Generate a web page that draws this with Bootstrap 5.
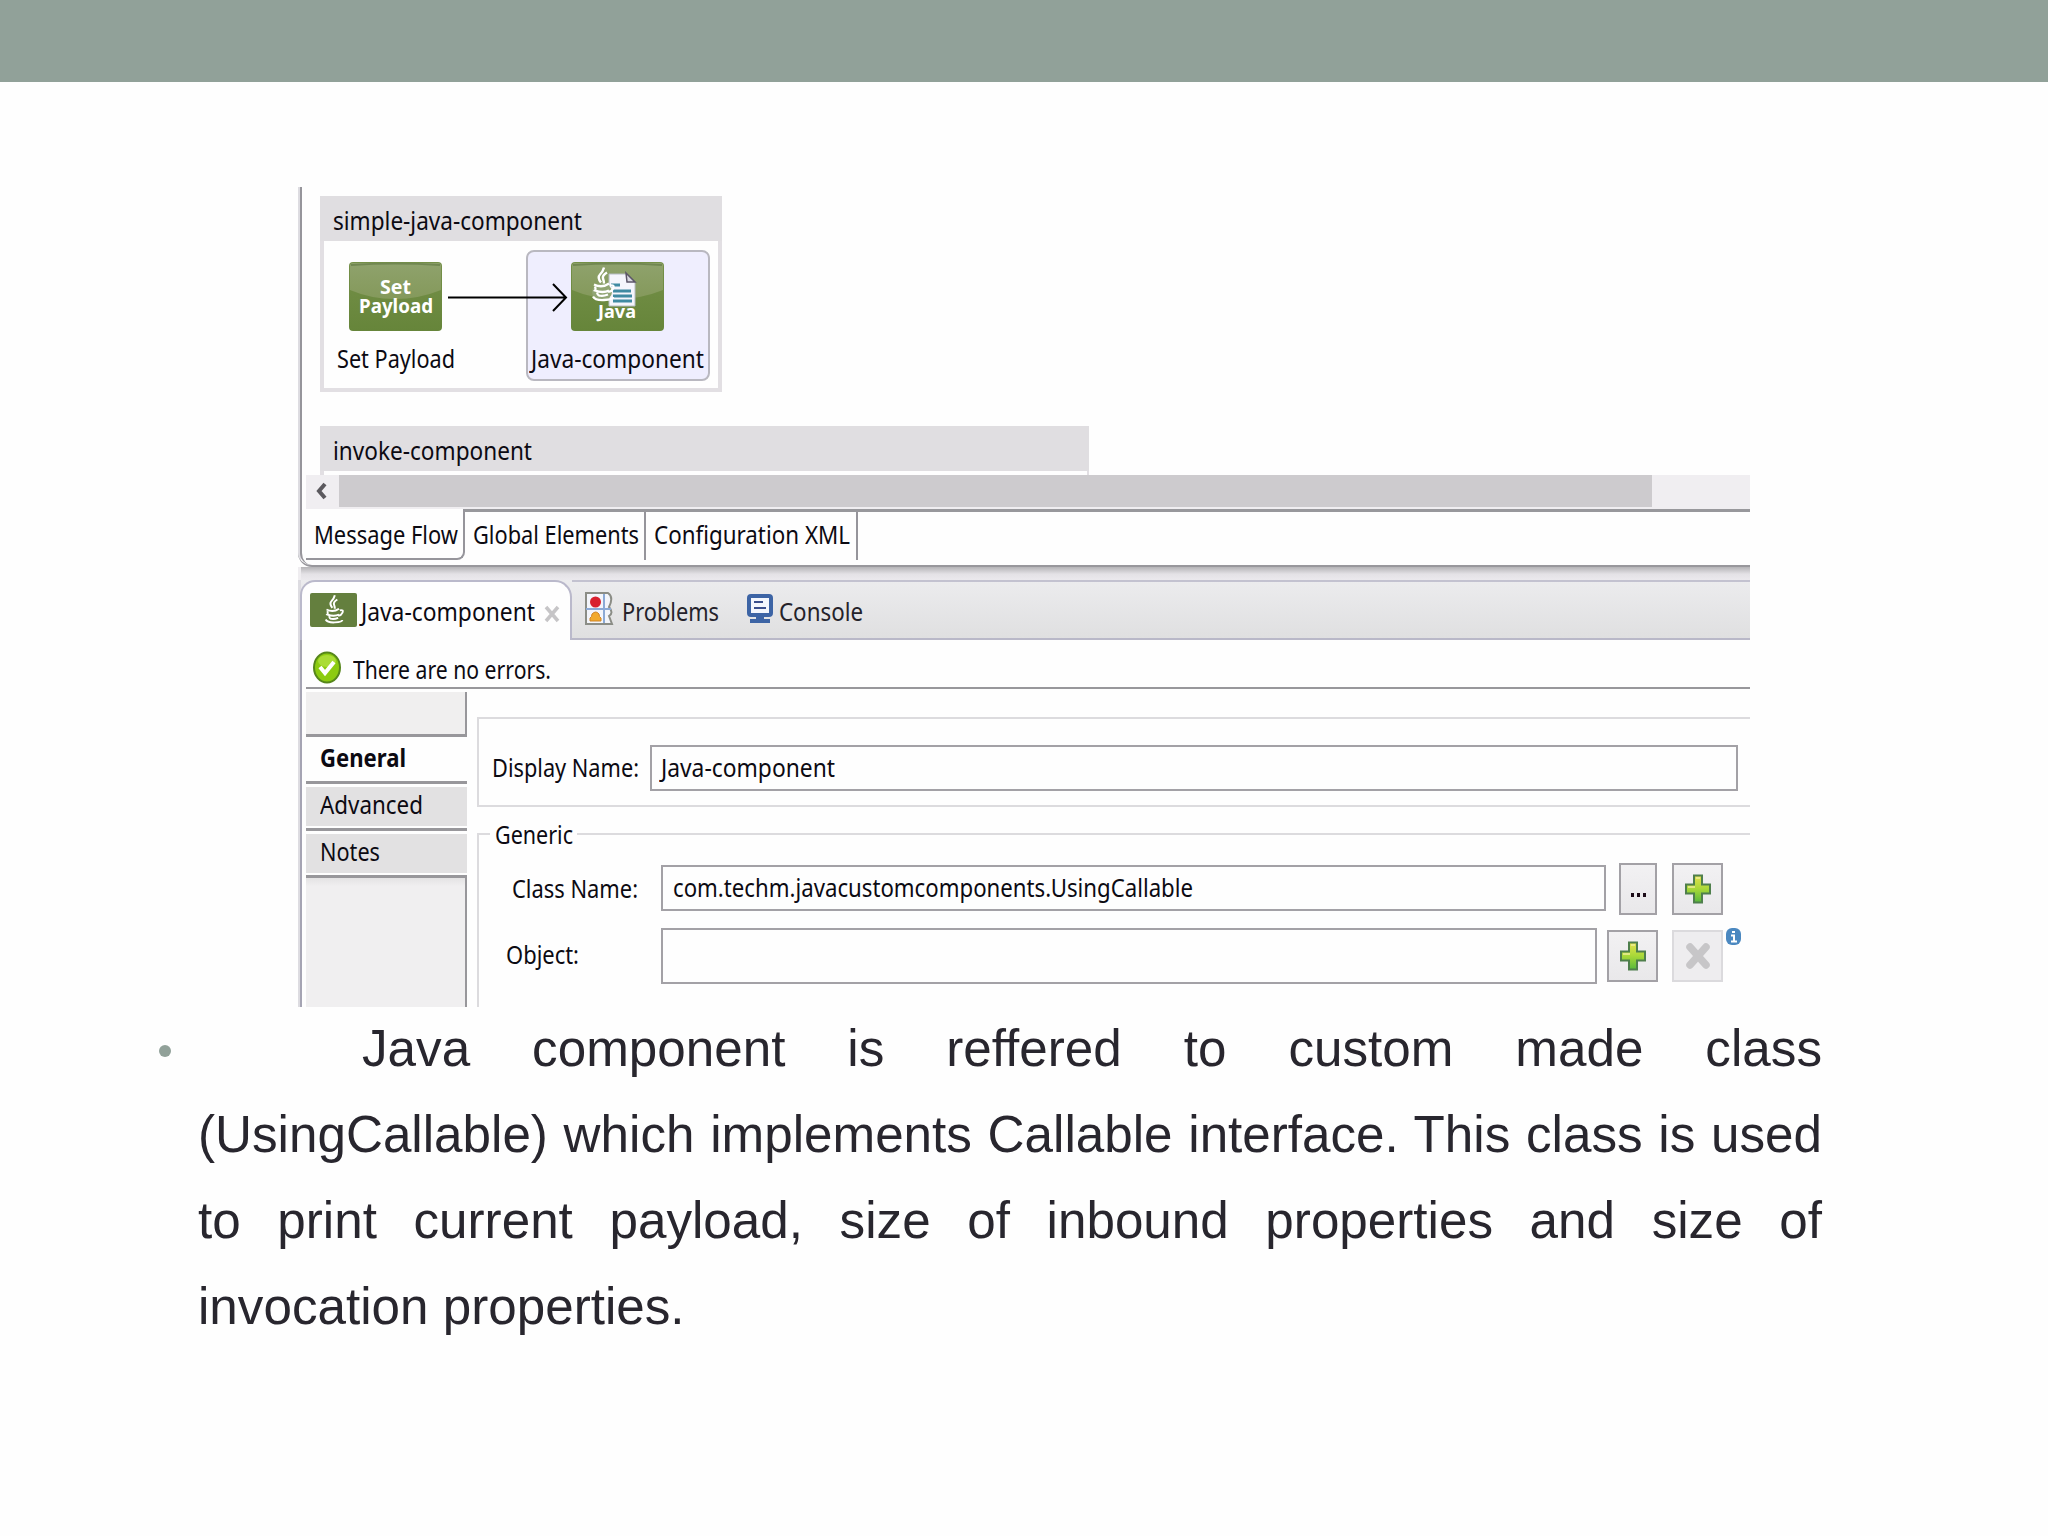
<!DOCTYPE html>
<html lang="en">
<head>
<meta charset="utf-8">
<title>Java component</title>
<link href="https://cdn.jsdelivr.net/npm/bootstrap@5.3.0/dist/css/bootstrap.min.css" rel="stylesheet">
<script src="https://cdn.jsdelivr.net/npm/bootstrap@5.3.0/dist/js/bootstrap.bundle.min.js"></script>
<style>
body{background:#fefefe;width:2048px;height:1536px;overflow:hidden;font-family:"Noto Sans","Open Sans",sans-serif;font-size:25.5px;line-height:36px;color:#0c0a12}
svg{display:block;flex:none}
.topband{height:82px;background:#91a199}
.ide{width:1452px;height:820px;margin:105px 0 0 298px;overflow:hidden}
[data-w]{display:inline-block;white-space:nowrap;transform-origin:0 50%;flex:none}
.editor{height:380px;background:linear-gradient(90deg,#dddce1 3px,#fefefe 3px);border-bottom:2px solid #98979c;border-bottom-left-radius:14px;position:relative}
.editor::before{content:"";position:absolute;left:2px;top:0;bottom:0;width:12px;border-left:2px solid #96959b;border-bottom-left-radius:12px}
.flowcanvas{height:288px;padding:9px 0 0 22px}
.flowbox{width:402px;height:196px;border:4px solid #e2dfe3;border-top:0}
.flowhead{height:45px;background:#e0dee1;padding:6px 0 0 13px}
.flowbox .flowhead{margin:0 -4px}
.flownodes{height:147px;position:relative}
.node{position:absolute;display:flex;flex-direction:column;align-items:flex-start}
.node-set{left:13px;top:21px}
.node-java{left:202px;top:9px;width:184px;height:131px;background:#efeefe;border:2px solid #b9b8c0;border-radius:8px;padding-top:10px}
.node-java svg{margin-left:43px}
.node-set svg{margin-left:12px}
.node span{margin-top:9px}
.wire{position:absolute;left:124px;top:40px}
.flow2{width:769px;margin-top:34px;border-left:4px solid #e2dfe3;border-right:2px solid #e2dfe3}
.flow2 .flowhead{margin-left:-4px;margin-right:-2px}
.hbar{height:34px;margin-left:8px;background:#f0eef1}
.hbar-arrow{width:33px}
.hbar-thumb{width:1313px;height:32px;background:#cdcbce}
.pages{height:56px;margin-left:8px}
.page-cur{width:159px;height:51px;border-right:2px solid #96959b;border-bottom:2px solid #96959b;border-bottom-right-radius:8px;padding:7px 0 0 8px}
.page-rest{flex:1;border-top:3px solid #98989c}
.page-tab{height:48px;border-right:2px solid #96959b;padding-top:4px}
.sash{height:13px;background:linear-gradient(#b5b4b7,#e4e2e6 55%,#ebe9ed);border-left:3px solid #efedf0}
.viewtabs{height:60px;background:linear-gradient(90deg,#dddce1 3px,transparent 3px),linear-gradient(#ececee,#dfdfe0);padding-left:2px}
.view-cur{width:272px;height:60px;background:#fefefe;border:2px solid #bab9cb;border-bottom:0;border-radius:15px 17px 0 0;padding:11px 0 0 8px}
.view-rest{flex:1;border-top:2px solid #c3c2d0;border-bottom:2px solid #b9b8c8;padding-top:11px;color:#24222a}
.view{height:367px;border-left:3px solid #dddce1;position:relative}
.view-in{border-left:2px solid #a5a4b3;padding-left:4px;height:100%;margin-left:-1px}
.statusline{height:49px;border-bottom:2px solid #98979b;padding:11px 0 0 7px}
.side{width:161px;margin-top:3px}
.side div{height:47px;border-bottom:3px solid #98979b;padding:2px 0 0 14px}
.side .side-top{height:45px;background:#f0efef;border-right:2px solid #98979b}
.side .side-off{background:linear-gradient(#fefefe 3px,#e2e1e2 3px,#e2e1e2 42px,#fefefe 42px)}
.side .side-rest{height:140px;background:linear-gradient(#e4e3e4,#f0eff0 8px);border:0;border-right:2px solid #98979b}
.form-side{margin-left:10px;padding-top:28px;width:1273px}
.grp1{height:90px;border:2px solid #dcdbde;border-right:0;padding:26px 0 0 14px}
.field{height:46px;border:2px solid #a3a1a6;background:#fefefe}
.grp2{height:176px;margin-top:26px;border:2px solid #dcdbde;border-right:0;border-bottom:0;padding-top:30px;position:relative}
.legend-t{position:absolute;left:11px;top:-13px;width:87px;background:#fefefe;padding-left:5px;line-height:24px}
.tool{width:51px;height:52px;border:2px solid #a3a1a6;background:linear-gradient(#f2f1f3,#e9e8ea);display:flex;align-items:center;justify-content:center}
.tool-off{border-color:#dbdadd;background:#eeedef}
.info{position:absolute;right:9px;top:93px}
.prose{width:1664px;margin:17px 0 0 159px;font:51.2px/86px "Liberation Sans",Arial,sans-serif;color:#28262e}
.dot{width:12px;height:12px;border-radius:50%;background:#91a199;margin-top:21px;flex:none}
.prose p{margin:-18px 0 0 27px;width:1624px;text-align:justify;text-indent:164px}
</style>
</head>
<body>
<svg width="0" height="0" class="position-absolute">
<defs>
<linearGradient id="gg" x1="0" y1="0" x2="0" y2="1"><stop offset="0" stop-color="#759049"/><stop offset="1" stop-color="#66853a"/></linearGradient>
<linearGradient id="gl" x1="0" y1="0" x2="0" y2="1"><stop offset="0" stop-color="#8fa26c"/><stop offset="1" stop-color="#84995b"/></linearGradient>
<linearGradient id="gp" x1="0" y1="0" x2="0" y2="1"><stop offset="0" stop-color="#e4e14f"/><stop offset=".5" stop-color="#a8d838"/><stop offset="1" stop-color="#56b83c"/></linearGradient>
<symbol id="tile" viewBox="0 0 93 69"><rect width="93" height="69" rx="4" fill="url(#gg)"/><path d="M1 4q0-3 3-3h85q3 0 3 3v24q-22 9-46 9T1 28z" fill="url(#gl)"/><path d="M2 3q44-3 89 0" fill="none" stroke="#718751" stroke-width="2"/></symbol>
<symbol id="cup" viewBox="0 0 24 34"><path d="M13 0q-1 4-4 7t1 8M16 5q-5 3-4 6t1 5" fill="none" stroke="#fff" stroke-width="2.400"/><path d="M3 17q8 4 15-1M19 18q5-1 3 3t-5 3M4 19q1 3 0 4 8 3 14 0M6 25q1 3 2 3 4 1 9-1M2 29q2 4 11 3.500t9-3" fill="none" stroke="#fff" stroke-width="2.300"/></symbol>
<symbol id="plus" viewBox="0 0 26 30"><path d="M9 1.500h8v9h8v9h-8v9H9v-9H1v-9h8z" fill="url(#gp)" stroke="#4f7f4c" stroke-width="2"/><path d="M11 4h4M3 13h7" stroke="#f0ee9a" stroke-width="1.500"/></symbol>
</defs>
</svg>

<div class="topband"></div>

<div class="ide d-flex flex-column">
  <div class="editor flex-shrink-0">
    <div class="flowcanvas">
      <div class="flowbox">
        <div class="flowhead"><span data-w="249">simple-java-component</span></div>
        <div class="flownodes">
          <div class="node node-java">
            <svg width="93" height="69"><use href="#tile"/>
              <path d="M38 12h18l8 8v24H38z" fill="#f5f5fc" stroke="#b6bcc4"/><path d="M55 11l9 9h-8z" fill="#d8d8e0" stroke="#5c5568" stroke-width="1.500"/>
              <path d="M40 23h9M42 29h18M42 34h19M42 39h19" stroke="#3f8aa2" stroke-width="3"/>
              <ellipse cx="31" cy="30" rx="10" ry="9" fill="#91a574"/>
              <use href="#cup" x="20" y="5" width="24" height="35"/>
              <text x="27" y="56" font-size="18.500" font-weight="700" fill="#fff" textLength="38" lengthAdjust="spacingAndGlyphs">Java</text></svg>
            <span data-w="173" style="margin-left:3px">Java-component</span>
          </div>
          <div class="node node-set">
            <svg width="93" height="69"><use href="#tile"/>
              <text x="31" y="32" font-size="19" font-weight="700" fill="#fff" textLength="31" lengthAdjust="spacingAndGlyphs">Set</text>
              <text x="10" y="51" font-size="19" font-weight="700" fill="#fff" textLength="74" lengthAdjust="spacingAndGlyphs">Payload</text></svg>
            <span data-w="118">Set Payload</span>
          </div>
          <svg class="wire" width="122" height="34" fill="none" stroke="#000" stroke-width="2"><path d="M0 16.500h118M105 3l13 13.500-13 13.500"/></svg>
        </div>
      </div>
      <div class="flow2"><div class="flowhead"><span data-w="199">invoke-component</span></div><div style="height:4px"></div></div>
    </div>
    <div class="hbar d-flex">
      <div class="hbar-arrow"><svg width="33" height="32"><path d="M19 9l-6 7 6 7" fill="none" stroke="#5b595e" stroke-width="4"/></svg></div>
      <div class="hbar-thumb"></div>
    </div>
    <div class="pages d-flex">
      <div class="page-cur"><span data-w="144">Message Flow</span></div>
      <div class="page-rest d-flex">
        <div class="page-tab" style="width:181px;padding-left:8px"><span data-w="166">Global Elements</span></div>
        <div class="page-tab" style="width:212px;padding-left:8px"><span data-w="196">Configuration XML</span></div>
      </div>
    </div>
  </div>

  <div class="sash flex-shrink-0"></div>
  <div class="viewtabs d-flex flex-shrink-0">
    <div class="view-cur d-flex">
      <svg width="47" height="35"><rect width="47" height="34" rx="2" fill="#647f3e"/><use href="#cup" x="14" y="2" width="20" height="29"/></svg>
      <span data-w="174" style="margin-left:4px">Java-component</span>
      <svg width="16" height="18" style="margin:12px 0 0 9px"><path d="M2 2l12 14M14 2L2 16" stroke="#c6c5c7" stroke-width="3.500"/></svg>
    </div>
    <div class="view-rest d-flex">
      <svg width="29" height="34" style="margin-left:13px;margin-top:-1px"><path d="M1 1h22q6 4 1 14 5 6 0 9l3 8H1z" fill="#f3f5fb" stroke="#8b8d86" stroke-width="2"/><path d="M19 2v29M1 17h25" stroke="#8ba9d6" stroke-width="2"/><circle cx="10.500" cy="10" r="5.500" fill="#d8202f"/><path d="M5 29v-3q2-1 2-4 4-4 7 0 0 3 2 4v3z" fill="#f2a92c" stroke="#cf8426"/></svg>
      <span data-w="97" style="margin-left:8px">Problems</span>
      <svg width="26" height="30" style="margin-left:28px;margin-top:1px"><rect x="2" y="2" width="22" height="19" rx="2" fill="#f4f7fd" stroke="#3d64a5" stroke-width="4"/><path d="M7 8h9M7 14h12" stroke="#3a4f8c" stroke-width="2.200"/><path d="M9 22h8v3h6v4H3v-4h6z" fill="#3d64a5"/></svg>
      <span data-w="84" style="margin-left:6px">Console</span>
    </div>
  </div>

  <div class="view flex-shrink-0"><div class="view-in">
    <div class="statusline d-flex">
      <svg width="28" height="34" viewBox="0 0 28 34"><ellipse cx="14" cy="16.500" rx="13" ry="15" fill="#8ccb10" stroke="#56861b" stroke-width="2"/><ellipse cx="14" cy="10" rx="9" ry="6" fill="#b4e243" opacity=".75"/><path d="M7 16l5 6 9-11" fill="none" stroke="#fff" stroke-width="4"/></svg>
      <span data-w="198" style="margin-left:12px">There are no errors.</span>
    </div>
    <div class="d-flex">
      <div class="side">
        <div class="side-top"></div>
        <div class="fw-bold"><span data-w="86">General</span></div>
        <div class="side-off"><span data-w="103">Advanced</span></div>
        <div class="side-off"><span data-w="60">Notes</span></div>
        <div class="side-rest"></div>
      </div>
      <div class="form-side">
        <div class="grp1 d-flex">
          <span data-w="147" style="margin:4px 0 0 -1px">Display Name:</span>
          <div class="field" style="width:1088px;margin-left:11px;padding:2px 0 0 9px"><span data-w="174">Java-component</span></div>
        </div>
        <div class="grp2">
          <div class="legend-t"><span data-w="78">Generic</span></div>
          <div class="d-flex" style="height:65px">
            <span data-w="126" style="margin:5px 0 0 33px">Class Name:</span>
            <div class="field" style="width:945px;margin-left:23px;padding:2px 0 0 10px"><span data-w="520">com.techm.javacustomcomponents.UsingCallable</span></div>
            <div class="tool" style="width:38px;margin:-2px 0 0 13px"><svg width="18" height="26"><path d="M2 19h3M8 19h3M14 19h3" stroke="#1c0c18" stroke-width="4"/></svg></div>
            <div class="tool" style="margin:-2px 0 0 15px"><svg width="26" height="30"><use href="#plus"/></svg></div>
          </div>
          <div class="d-flex">
            <span data-w="73" style="margin:6px 0 0 27px">Object:</span>
            <div class="field" style="width:936px;height:56px;margin:-2px 0 0 82px"></div>
            <div class="tool" style="margin:0 0 0 10px"><svg width="26" height="30"><use href="#plus"/></svg></div>
            <div class="tool tool-off" style="margin:0 0 0 14px"><svg width="26" height="28"><path d="M5 5l16 18M21 5L5 23" stroke="#c7c6c8" stroke-width="7.500" stroke-linecap="round"/></svg></div>
          </div>
          <svg class="info" width="15" height="18"><rect width="15" height="17" rx="6" fill="#4b88c0"/><path d="M6 4h3M5 7.500h3v6M5 13.500h6" stroke="#fff" stroke-width="2" fill="none"/></svg>
        </div>
      </div>
    </div>
  </div></div>
</div>

<div class="prose d-flex">
  <div class="dot"></div>
  <p>Java component is reffered to custom made class (UsingCallable) which implements Callable interface. This class is used to print current payload, size of inbound properties and size of invocation properties.</p>
</div>

<script>
// Condense each label to the width it is given in data-w.
document.querySelectorAll('[data-w]').forEach(function (el) {
  var natural = el.getBoundingClientRect().width, want = +el.dataset.w;
  el.style.transform = 'scaleX(' + want / natural + ')';
  el.style.marginRight = (want - natural) + 'px';
});
</script>
</body>
</html>
